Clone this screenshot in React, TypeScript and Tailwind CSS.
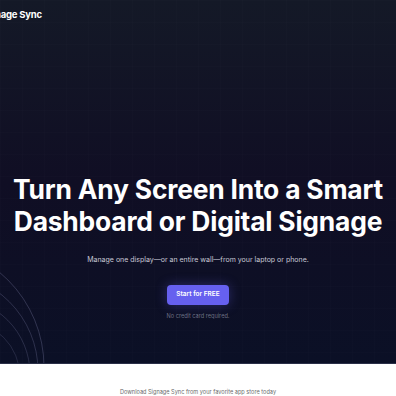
export default function App() {
  return (
    <div className="w-full min-h-screen bg-white overflow-hidden" style={{ fontFamily: "Inter, 'Noto Sans', sans-serif" }}>
      <section className="relative h-[364px] border-b border-[#2a2f48] bg-gradient-to-b from-[#141927] via-[#100e24] to-[#0b1026] overflow-hidden">
        {/* faint grid */}
        <div className="absolute inset-0 bg-[linear-gradient(to_right,rgba(255,255,255,0.008)_1px,transparent_1px),linear-gradient(to_bottom,rgba(255,255,255,0.008)_1px,transparent_1px)] bg-[size:22px_22px]" />
        {/* arcs bottom-left */}
        <svg className="absolute left-0 bottom-0 pointer-events-none" width="80" height="110" viewBox="0 254 80 110" fill="none">
          <circle cx="-79" cy="368" r="123" stroke="rgba(180,180,230,0.22)" strokeWidth="1" />
          <circle cx="-60" cy="372" r="98" stroke="rgba(180,180,230,0.2)" strokeWidth="1" />
          <circle cx="-46" cy="375" r="76" stroke="rgba(180,180,230,0.18)" strokeWidth="1" />
          <circle cx="-36" cy="378" r="56" stroke="rgba(180,180,230,0.15)" strokeWidth="1" />
        </svg>
        <div className="relative flex flex-col h-full">
          <header className="h-[30px] flex items-center">
            <span className="ml-[-19px] text-[9.5px] font-bold text-white tracking-tight">Signage Sync</span>
          </header>
          <div className="flex flex-col items-center pt-[143px]">
            <h1 className="text-center text-white font-bold text-[26.4px] leading-[32px] tracking-[-0.2px]">
              Turn Any Screen Into a Smart
              <br />
              Dashboard or Digital Signage
            </h1>
            <p className="mt-[18px] text-[7px] text-[#c9c9d6]">
              Manage one display—or an entire wall—from your laptop or phone.
            </p>
            <button className="mt-[19px] w-[62px] h-[20px] rounded-[4px] bg-[#6660ef] text-white text-[6.5px] font-semibold shadow-[0_0_12px_rgba(102,96,239,0.35)]">
              Start for FREE
            </button>
            <p className="mt-[7px] text-[5.6px] text-[#6e7185]">No credit card required.</p>
          </div>
        </div>
      </section>
      <div className="flex justify-center pt-[24px]">
        <p className="text-[5.6px] text-[#6b6b6b]">Download Signage Sync from your favorite app store today</p>
      </div>
    </div>
  );
}
